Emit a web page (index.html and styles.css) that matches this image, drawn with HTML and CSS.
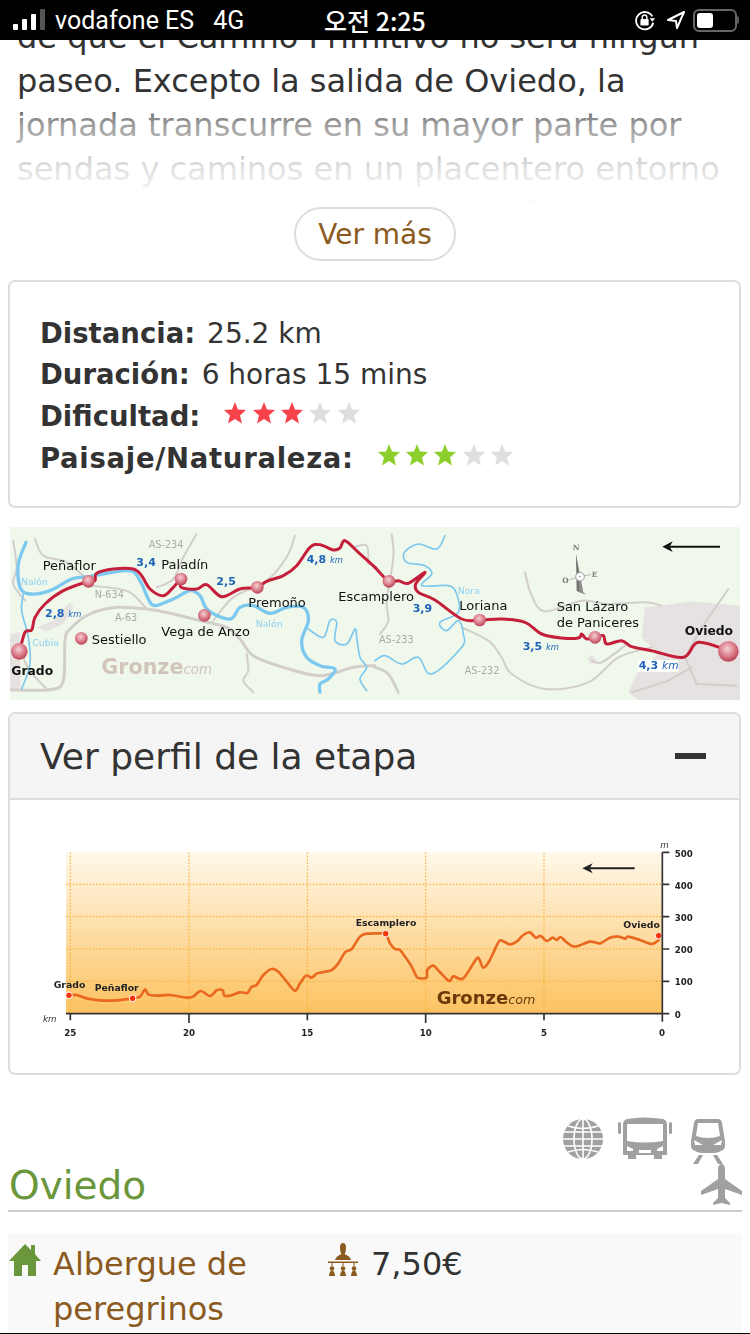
FILE: index.html
```html
<!DOCTYPE html>
<html>

<head>
    <meta charset="UTF-8">
    <title>Etapa Oviedo - Grado</title>
    <link rel="stylesheet" href="styles.css">
</head>

<body>
<div class="page">
    <div class="status-bar">
        <div class="status-left">
            <svg class="signal" width="32" height="22" viewBox="0 0 32 22">
                <rect x="0" y="15" width="5" height="6" rx="1" fill="#fff"/>
                <rect x="9" y="10" width="5" height="11" rx="1" fill="#fff"/>
                <rect x="18" y="5" width="5" height="16" rx="1" fill="#fff"/>
                <rect x="27" y="0" width="5" height="21" rx="1" fill="#555"/>
            </svg>
            <span>vodafone ES</span>
            <span class="network">4G</span>
        </div>
        <div class="status-time">오전 2:25</div>
        <div class="status-right">
            <svg width="22" height="22" viewBox="0 0 24 24">
                <path d="M20 8 A9.500 9.500 0 1 0 21 15" fill="none" stroke="#fff" stroke-width="2"/>
                <path d="M17 10 L23 10 L20 14 Z" fill="#fff"/>
                <rect x="7" y="11" width="9" height="7" rx="1" fill="#fff"/>
                <path d="M9 11 V9 a2.500 2.500 0 0 1 5 0 V11" fill="none" stroke="#fff" stroke-width="1.500"/>
            </svg>
            <svg class="location" width="20" height="20" viewBox="0 0 20 20">
                <path d="M18 2 L2 10 L10 11 L11 18 Z" fill="none" stroke="#fff" stroke-width="2" stroke-linejoin="round"/>
            </svg>
            <div class="battery"><div class="battery-level"></div></div>
            <div class="battery-tip"></div>
        </div>
    </div>

    <div class="intro">
        <p class="intro-text">de que el Camino Primitivo no será ningún paseo. Excepto la salida de Oviedo, la jornada transcurre en su mayor parte por sendas y caminos en un placentero entorno natural, entre bosques y pequeñas aldeas</p>
        <div class="intro-fade"></div>
    </div>
    <div class="more-row"><a class="more-button">Ver más</a></div>

    <div class="card stats">
        <div class="stat stat-first"><b>Distancia:</b> 25.2 km</div>
        <div class="stat"><b>Duración:</b> 6 horas 15 mins</div>
        <div class="stat stat-stars">
            <b>Dificultad:</b>
            <span class="stars stars-hard">
                <svg viewBox="0 0 24 24"><path d="M12 1 L15 8.500 L23 9 L17 14.500 L19 22.500 L12 18 L5 22.500 L7 14.500 L1 9 L9 8.500 Z" fill="#f6434b"/></svg>
                <svg viewBox="0 0 24 24"><path d="M12 1 L15 8.500 L23 9 L17 14.500 L19 22.500 L12 18 L5 22.500 L7 14.500 L1 9 L9 8.500 Z" fill="#f6434b"/></svg>
                <svg viewBox="0 0 24 24"><path d="M12 1 L15 8.500 L23 9 L17 14.500 L19 22.500 L12 18 L5 22.500 L7 14.500 L1 9 L9 8.500 Z" fill="#f6434b"/></svg>
                <svg viewBox="0 0 24 24"><path d="M12 1 L15 8.500 L23 9 L17 14.500 L19 22.500 L12 18 L5 22.500 L7 14.500 L1 9 L9 8.500 Z" fill="#dedede"/></svg>
                <svg viewBox="0 0 24 24"><path d="M12 1 L15 8.500 L23 9 L17 14.500 L19 22.500 L12 18 L5 22.500 L7 14.500 L1 9 L9 8.500 Z" fill="#dedede"/></svg>
            </span>
        </div>
        <div class="stat stat-stars">
            <b class="stat-long">Paisaje/Naturaleza:</b>
            <span class="stars stars-nature">
                <svg viewBox="0 0 24 24"><path d="M12 1 L15 8.500 L23 9 L17 14.500 L19 22.500 L12 18 L5 22.500 L7 14.500 L1 9 L9 8.500 Z" fill="#8ccf2c"/></svg>
                <svg viewBox="0 0 24 24"><path d="M12 1 L15 8.500 L23 9 L17 14.500 L19 22.500 L12 18 L5 22.500 L7 14.500 L1 9 L9 8.500 Z" fill="#8ccf2c"/></svg>
                <svg viewBox="0 0 24 24"><path d="M12 1 L15 8.500 L23 9 L17 14.500 L19 22.500 L12 18 L5 22.500 L7 14.500 L1 9 L9 8.500 Z" fill="#8ccf2c"/></svg>
                <svg viewBox="0 0 24 24"><path d="M12 1 L15 8.500 L23 9 L17 14.500 L19 22.500 L12 18 L5 22.500 L7 14.500 L1 9 L9 8.500 Z" fill="#dedede"/></svg>
                <svg viewBox="0 0 24 24"><path d="M12 1 L15 8.500 L23 9 L17 14.500 L19 22.500 L12 18 L5 22.500 L7 14.500 L1 9 L9 8.500 Z" fill="#dedede"/></svg>
            </span>
        </div>
    </div>

    <svg class="route-map" width="730" height="173" viewBox="30 9 2190 519">
        <defs>
            <radialGradient id="pin" cx="45%" cy="38%" r="65%">
                <stop offset="0" stop-color="#f5d0d6"/>
                <stop offset="0.55" stop-color="#dc7f8c"/>
                <stop offset="1" stop-color="#b63a4e"/>
            </radialGradient>
        </defs>
        <rect x="30" y="9" width="2190" height="519" fill="#f0f8ec"/>

        <!-- zonas urbanas -->
        <g fill="#e6e2e2">
            <path d="M30 330 L60 325 L62 500 L30 500 Z"/>
            <path d="M110 310 L160 290 L210 235 L220 250 L190 300 L140 322 Z"/>
            <g transform="translate(1125 0)">
                <path d="M810 250 L860 245 L950 232 L1095 245 L1095 528 L790 528 L760 505 L790 440 L850 390 L800 340 Z"/>
                <path d="M636 405 L650 392 L670 415 L650 420 Z"/>
            </g>
        </g>

        <!-- carreteras -->
        <g fill="none" stroke="#d2cecb" stroke-width="6" stroke-linejoin="round" stroke-linecap="round">
            <path class="smooth" stroke-width="9" d="M30 497 L150 497 L190 470 L195 350 L210 315 L270 270 L350 250 L440 255 L520 270 L600 290 L680 310 L720 345 L760 395 L850 430 L960 455 L1060 430 L1125 425"/>
            <path class="smooth" d="M265 185 L320 190 L390 205 L440 255"/>
            <path class="smooth" d="M105 45 L130 95 L200 115 L265 170"/>
            <path class="smooth" d="M40 50 L50 130 L40 180 L75 230"/>
            <path class="smooth" d="M590 30 L550 100 L520 165 L470 190"/>
            <path class="smooth" d="M885 35 L860 100 L800 170 L700 220 L640 290"/>
            <path class="smooth" d="M1060 70 L1100 65 L1105 120"/>
            <path class="smooth" d="M140 495 L90 440 L60 380"/>
            <path class="smooth" d="M740 390 L745 440 L730 470 L760 505"/>
            <g transform="translate(1125 0)">
                <path class="smooth" d="M50 30 L55 100 L35 230 L40 290 L15 330"/>
                <path class="smooth" stroke-width="8" d="M0 430 L40 450 L70 505"/>
                <path class="smooth" d="M260 310 L340 350 L380 400 L410 450 L510 495 L640 475 L730 400 L830 370"/>
                <path class="smooth" d="M450 145 L470 215 L510 262 L620 230 L700 240 L810 235 L860 245"/>
                <path d="M1060 195 L980 310 L930 400 L965 480 L1085 485"/>
                <path d="M770 505 L880 470 L950 430"/>
                <path class="smooth" d="M650 410 L680 415 L750 365"/>
            </g>
        </g>

        <!-- rios -->
        <g fill="none" stroke="#7cc8ee" stroke-width="5" stroke-linejoin="round" stroke-linecap="round">
            <path class="smooth" stroke-width="10" d="M78 55 L55 120 L60 190 L90 210 L150 200 L215 165 L265 158 L385 140 L420 170 L445 225 L465 245 L520 225 L570 200 L600 215 L625 260 L690 285 L720 250 L760 245 L810 268 L860 250 L910 250 L925 290 L905 350 L920 400 L960 425 L1005 435 L985 465 L960 480 L960 505"/>
            <path class="smooth" d="M70 210 L65 260 L85 340 L90 420 L65 495"/>
            <path class="smooth" d="M925 315 L970 340 L990 290 L1010 295 L1005 350 L1040 360 L1065 315 L1070 340 L1080 400 L1100 430 L1080 465 L1100 500"/>
            <g transform="translate(1125 0)">
                <path class="smooth" d="M210 35 L185 75 L130 60 L88 85 L95 115 L150 125 L170 150 L140 185 L220 185 L245 210 L250 265 L195 295 L215 320 L250 290 L265 330 L260 370 L170 450 L130 400 L80 420 L30 395 L0 410"/>
            </g>
        </g>

        <!-- ruta -->
        <g fill="none" stroke="#c41e3a" stroke-width="9" stroke-linejoin="round" stroke-linecap="round">
            <path class="smooth" d="M58,385 75,325 95,318 105,280 135,240 190,200 265,172 285,170 290,148 340,135 400,135 425,155 450,195 490,215 520,190 543,165 543,190 590,195 620,182 665,218 720,195 772,190 800,172 850,155 890,125 930,70 960,62 1000,78 1020,72 1035,50 1075,85 1125,130"/>
            <path class="smooth" transform="translate(1125 0)" d="M0,130 42,172 70,170 100,178 150,145 122,180 130,205 180,228 260,285 315,288 380,285 450,295 500,330 560,342 610,342 620,330 635,345 660,340 685,335 695,360 740,350 770,368 830,380 925,400 970,355 1060,380"/>
        </g>

        <!-- pueblos -->
        <g fill="url(#pin)">
            <circle cx="58" cy="382" r="25"/>
            <circle cx="265" cy="172" r="19"/>
            <circle cx="244" cy="343" r="19"/>
            <circle cx="543" cy="165" r="19"/>
            <circle cx="613" cy="274" r="19"/>
            <circle cx="772" cy="190" r="19"/>
            <circle cx="1167" cy="172" r="19"/>
            <circle cx="1439" cy="288" r="19"/>
            <circle cx="1785" cy="340" r="19"/>
            <circle cx="2185" cy="382" r="31"/>
        </g>

        <g class="map-town">
            <text x="128" y="139">Peñaflor</text>
            <text x="275" y="359">Sestiello</text>
            <text x="484" y="134">Paladín</text>
            <text x="484" y="335">Vega de Anzo</text>
            <text x="745" y="248">Premoño</text>
            <text x="1015" y="230">Escamplero</text>
            <text x="1378" y="257">Loriana</text>
            <text x="1670" y="260">San Lázaro</text>
            <text x="1670" y="308">de Paniceres</text>
            <text class="map-town-main" x="34" y="454">Grado</text>
            <text class="map-town-main" x="2054" y="332">Oviedo</text>
        </g>
        <g class="map-road">
            <text x="446" y="71">AS-234</text>
            <text x="284" y="221">N-634</text>
            <text x="345" y="291">A-63</text>
            <text x="1137" y="356">AS-233</text>
            <text x="1394" y="449">AS-232</text>
        </g>
        <g class="map-river">
            <text x="63" y="182">Nalón</text>
            <text x="97" y="365">Cubia</text>
            <text x="767" y="308">Nalón</text>
            <text x="1373" y="209">Nora</text>
        </g>
        <rect x="1915" y="408" width="120" height="36" fill="#fff"/>
        <g class="map-km">
            <text x="135" y="278">2,8 <tspan class="map-km-unit">km</tspan></text>
            <text x="409" y="125">3,4</text>
            <text x="649" y="182">2,5</text>
            <text x="920" y="117">4,8 <tspan class="map-km-unit">km</tspan></text>
            <text x="1238" y="263">3,9</text>
            <text x="1568" y="377">3,5 <tspan class="map-km-unit">km</tspan></text>
            <text x="1916" y="435">4,3 <tspan class="map-km-unit map-km-wide">km</tspan></text>
        </g>
        <text class="map-logo" x="304" y="450">Gronze<tspan class="map-logo-com">com</tspan></text>

        <!-- rosa de los vientos -->
        <g transform="translate(1125 0)">
            <path d="M603 90 L625 205 L634 212 L612 205 Z" fill="#8c8c8c"/>
            <path d="M603 90 L612 150 L612 205 L605 200 Z" fill="#6f6f6f"/>
            <circle cx="615" cy="158" r="13" fill="#fff" stroke="#999" stroke-width="3"/>
            <circle cx="615" cy="158" r="2" fill="#666"/>
            <path d="M582 167 L602 162 M628 155 L648 152" stroke="#999" stroke-width="2"/>
            <g class="map-compass">
                <text x="593" y="77">N</text>
                <text x="562" y="177">O</text>
                <text x="650" y="160">E</text>
            </g>
            <path d="M1035 68 H885" stroke="#111" stroke-width="6"/>
            <path d="M862 68 L893 52 L884 68 L893 84 Z" fill="#111"/>
        </g>
    </svg>

    <div class="card profile">
        <div class="profile-head">
            <span>Ver perfil de la etapa</span>
            <span class="collapse-bar"></span>
        </div>
        <div class="profile-body">
            <svg class="profile-chart" width="690" height="210" viewBox="0 0 2070 630">
                <defs>
                    <linearGradient id="sky" x1="0" y1="0" x2="0" y2="1">
                        <stop offset="0" stop-color="#fff8ea"/>
                        <stop offset="1" stop-color="#fcc260"/>
                    </linearGradient>
                </defs>
                <rect x="108" y="52" width="1789" height="484" fill="url(#sky)"/>
                <g stroke="#fbab2e" stroke-width="3" stroke-dasharray="5 5" fill="none">
                    <path d="M108 148 H1897 M108 245 H1897 M108 342 H1897 M108 439 H1897"/>
                    <path d="M121 52 V536 M477 52 V536 M832 52 V536 M1187 52 V536 M1542 52 V536"/>
                </g>
                <path class="smooth" fill="none" stroke="#e8691f" stroke-width="8" stroke-linejoin="round" stroke-linecap="round" d="M118,481 140,480 170,490 210,496 260,496 308,490 330,485 345,463 355,478 380,482 420,480 470,488 490,484 512,468 540,483 560,466 578,466 583,482 600,482 630,472 652,474 665,455 680,450 700,420 725,402 745,410 770,440 795,467 810,445 828,422 845,428 860,416 875,412 905,405 925,385 945,352 965,342 990,305 1010,296 1050,295 1067,296 1080,325 1095,342 1110,345 1125,365 1145,395 1160,425 1170,430 1190,428 1192,405 1210,392 1230,412 1258,438 1270,424 1300,430 1338,373 1348,373 1360,398 1378,378 1405,322 1415,317 1440,328 1460,320 1480,300 1500,292 1517,308 1532,303 1550,318 1568,308 1580,315 1592,306 1610,322 1635,335 1680,320 1710,325 1740,308 1765,305 1785,311 1795,305 1830,315 1865,327 1886,315"/>
                <g fill="#f7330c" stroke="#fff" stroke-width="3">
                    <circle cx="117" cy="481" r="10"/>
                    <circle cx="308" cy="490" r="10"/>
                    <circle cx="1067" cy="296" r="10"/>
                    <circle cx="1886" cy="302" r="10"/>
                </g>
                <path d="M1814 100 H1680" stroke="#222" stroke-width="6"/>
                <path d="M1657 100 L1688 85 L1679 100 L1688 115 Z" fill="#222"/>
                <g stroke="#333" stroke-width="5" fill="none">
                    <path d="M108 536 H1897 M1897 52 V560 M1897 52 H1918 M1897 148 H1918 M1897 245 H1918 M1897 342 H1918 M1897 439 H1918 M1897 536 H1918"/>
                    <path d="M121 536 V556 M477 536 V564 M832 536 V556 M1187 536 V564 M1542 536 V556"/>
                </g>
                <g class="chart-place">
                    <text x="71" y="458">Grado</text>
                    <text x="194" y="467">Peñaflor</text>
                    <text x="977" y="272">Escamplero</text>
                    <text x="1780" y="280">Oviedo</text>
                </g>
                <g class="chart-axis">
                    <text x="1934" y="65">500</text>
                    <text x="1934" y="161">400</text>
                    <text x="1934" y="258">300</text>
                    <text x="1934" y="354">200</text>
                    <text x="1934" y="451">100</text>
                    <text x="1934" y="548">0</text>
                    <text x="103" y="603">25</text>
                    <text x="459" y="603">20</text>
                    <text x="814" y="603">15</text>
                    <text x="1169" y="603">10</text>
                    <text x="1533" y="603">5</text>
                    <text x="1887" y="603">0</text>
                </g>
                <text class="chart-unit" x="39" y="560">km</text>
                <text class="chart-unit" x="1891" y="40">m</text>
                <text class="chart-logo" x="1220" y="507">Gronze<tspan class="chart-logo-com">com</tspan></text>
            </svg>
        </div>
    </div>

    <div class="place-head">
        <h2 class="place-name">Oviedo</h2>
        <div class="transport">
            <svg class="icon-globe" width="40" height="40" viewBox="0 0 40 40">
                <circle cx="20" cy="20" r="20" fill="#a0a0a0"/>
                <g fill="none" stroke="#fff" stroke-width="1.600">
                    <ellipse cx="20" cy="20" rx="9" ry="20"/>
                    <path d="M20 0 V40 M1 13 H39 M0 20 H40 M1 27 H39"/>
                    <path d="M5 7 Q20 12 35 7 M5 33 Q20 28 35 33"/>
                </g>
            </svg>
            <svg class="icon-bus" width="54" height="42" viewBox="0 0 54 42">
                <path d="M9 2 Q27 -1 45 2 Q49 3 49 8 V38 H44 V42 H36 V38 H18 V42 H10 V38 H5 V8 Q5 3 9 2 Z" fill="#a0a0a0"/>
                <rect x="0" y="5" width="3" height="12" rx="1.500" fill="#a0a0a0"/>
                <rect x="51" y="5" width="3" height="12" rx="1.500" fill="#a0a0a0"/>
                <path d="M9 7 H45 V24 Q27 27 9 24 Z" fill="#fff"/>
                <path d="M9 29 L15 32 V34 H9 Z M45 29 L39 32 V34 H45 Z M21 33 H33 V36 H21 Z" fill="#fff"/>
            </svg>
            <svg class="icon-train" width="34" height="45" viewBox="0 0 34 45">
                <path d="M7 0 H27 Q30 0 31 4 L34 22 V28 Q33 32 24 34 H10 Q1 32 0 28 V22 L3 4 Q4 0 7 0 Z" fill="#a0a0a0"/>
                <path d="M7 4 H27 L29 17 Q17 21 5 17 Z" fill="#fff"/>
                <path d="M3 21 L12 26 L4 26 Z M31 21 L22 26 L30 26 Z" fill="#fff"/>
                <path d="M8 36 H12 L7 45 H2 Z M22 36 H26 L32 45 H27 Z" fill="#a0a0a0"/>
            </svg>
            <svg class="icon-plane" width="41" height="41" viewBox="0 0 41 41">
                <path d="M20.500 0 Q24 0 24 6 V15 L41 27 V31 L24 25 V34 L29 39 V41 L20.500 39 L12 41 V39 L17 34 V25 L0 31 V27 L17 15 V6 Q17 0 20.500 0 Z" fill="#a0a0a0"/>
            </svg>
        </div>
    </div>

    <div class="lodging">
        <div class="lodging-name">
            <svg class="icon-house" width="32" height="32" viewBox="0 0 32 32">
                <path d="M16 0 L22 6 V1 H26 V10 L32 17 H27 V32 H19 V21 H13 V32 H5 V17 H0 Z" fill="#6a963c"/>
            </svg>
            <a>Albergue de peregrinos</a>
        </div>
        <div class="lodging-price">
            <svg class="icon-beds" width="30" height="34" viewBox="0 0 30 34">
                <g fill="#8b5a1e">
                    <path d="M15 0 Q18 0 18 5 Q18 9 16.500 11 Q22 13 23 17 H7 Q8 13 13.500 11 Q12 9 12 5 Q12 0 15 0 Z"/>
                    <rect x="0" y="18.500" width="30" height="1.500"/>
                    <path d="M3.500 20 H4.500 V23 H3.500 Z M14.500 20 H15.500 V23 H14.500 Z M25.500 20 H26.500 V23 H25.500 Z"/>
                    <circle cx="4" cy="25.500" r="2.300"/>
                    <circle cx="15" cy="25.500" r="2.300"/>
                    <circle cx="26" cy="25.500" r="2.300"/>
                    <path d="M1 33 Q1.500 27.500 4 27.500 Q6.500 27.500 7 33 Z M12 33 Q12.500 27.500 15 27.500 Q17.500 27.500 18 33 Z M23 33 Q23.500 27.500 26 27.500 Q28.500 27.500 29 33 Z"/>
                </g>
            </svg>
            <span>7,50€</span>
        </div>
    </div>
</div>
<script src="smooth.js"></script>
</body>
</html>
```

FILE: styles.css
```css
body {
    margin: 0;
    background-color: #fff;
    font-family: "DejaVu Sans", "Noto Sans CJK KR", sans-serif;
    color: #333;
}

.page {
    display: flex;
    flex-direction: column;
    width: 750px;
    height: 1334px;
    box-sizing: border-box;
    overflow: hidden;
    border-bottom: 1px solid #000;
}

.status-bar {
    display: flex;
    flex: none;
    align-items: center;
    height: 40px;
    background-color: #000;
    color: #fff;
    font-family: Roboto, "Noto Sans CJK KR", sans-serif;
    font-size: 25px;
}

.status-left {
    display: flex;
    flex: 0 0 324px;
    align-items: center;
    box-sizing: border-box;
    padding-left: 13px;
}

.signal {
    margin-right: 10px;
}

.network {
    margin-left: 19px;
}

.status-time {
    font-family: "Noto Sans CJK KR", sans-serif;
    font-size: 25px;
    font-weight: 500;
}

.status-right {
    display: flex;
    align-items: center;
    margin-left: auto;
    padding-right: 11px;
}

.location {
    margin: 0 7px 0 10px;
}

.battery {
    box-sizing: border-box;
    width: 44px;
    height: 23px;
    border: 2px solid #666;
    border-radius: 6px;
}

.battery-level {
    width: 16px;
    height: 15px;
    margin: 2px;
    background-color: #fff;
    border-radius: 3px;
}

.battery-tip {
    width: 2px;
    height: 8px;
    background-color: #555;
    border-radius: 0 2px 2px 0;
}

.intro {
    position: relative;
    flex: none;
    height: 165px;
    overflow: hidden;
}

.intro-text {
    margin: -25px 0 0;
    padding: 0 10px 0 17px;
    font-size: 32px;
    line-height: 44px;
}

.intro-fade {
    position: absolute;
    left: 0;
    right: 0;
    top: 55px;
    bottom: 0;
    background: linear-gradient(rgba(255, 255, 255, 0), rgba(255, 255, 255, 0.52) 27%, rgba(255, 255, 255, 0.85) 67%, #fff);
}

.more-row {
    display: flex;
    flex: none;
    justify-content: center;
    height: 75px;
}

.more-button {
    display: flex;
    align-items: center;
    justify-content: center;
    box-sizing: border-box;
    width: 162px;
    height: 54px;
    margin-top: 2px;
    border: 2px solid #ddd;
    border-radius: 27px;
    color: #8b5a1e;
    font-size: 28px;
}

.card {
    flex: none;
    box-sizing: border-box;
    width: 733px;
    margin-left: 8px;
    border: 2px solid #ddd;
    border-radius: 7px;
}

.stats {
    height: 228px;
    padding: 31px 30px 0;
}

.stat {
    height: 41px;
    font-size: 28px;
    line-height: 41px;
}

.stat b {
    margin-right: 3px;
    font-size: 27.5px;
    font-weight: bold;
}

.stat .stat-long {
    letter-spacing: 0.7px;
}

.stat-stars {
    display: flex;
    align-items: center;
    height: 42px;
}

.stars {
    display: flex;
    gap: 4.3px;
    margin-top: -6px;
    filter: blur(0.5px);
}

.stars svg {
    width: 24px;
    height: 24px;
}

.stars-hard {
    margin-left: 20px;
}

.stars-nature {
    margin-left: 20px;
}

.route-map {
    display: block;
    flex: none;
    margin: 19px 0 0 10px;
    filter: blur(0.3px);
}

.map-town text {
    font-size: 39px;
    fill: #111;
}

.map-town .map-town-main {
    font-size: 37px;
    font-weight: bold;
}

.map-road text {
    font-size: 29px;
    fill: #aaa;
}

.map-river text {
    font-size: 28px;
    fill: #8fd0f2;
}

.map-km text {
    font-size: 33px;
    font-weight: bold;
    fill: #1c63b8;
}

.map-km .map-km-unit {
    font-size: 25px;
    font-weight: normal;
    font-style: italic;
}

.map-km .map-km-wide {
    font-size: 32px;
}

.map-logo {
    font-size: 62px;
    font-weight: bold;
    fill: #d2c4ba;
}

.map-logo-com {
    font-size: 40px;
    font-weight: normal;
    font-style: italic;
}

.map-compass text {
    font-family: "DejaVu Serif", serif;
    font-size: 22px;
    font-weight: bold;
    fill: #777;
}

.profile {
    height: 363px;
    margin-top: 12px;
}

.profile-head {
    display: flex;
    align-items: center;
    justify-content: space-between;
    box-sizing: border-box;
    height: 86px;
    padding: 0 33px 0 30px;
    background-color: #f5f5f5;
    border-bottom: 2px solid #ddd;
    border-radius: 5px 5px 0 0;
    font-size: 36px;
}

.collapse-bar {
    width: 31px;
    height: 6px;
    background-color: #333;
}

.profile-body {
    padding: 35px 0 0 20px;
}

.profile-chart {
    display: block;
    filter: blur(0.3px);
}

.chart-place text {
    font-size: 28px;
    font-weight: bold;
    fill: #222;
}

.chart-axis text {
    font-size: 26px;
    font-weight: bold;
    fill: #222;
}

.chart-unit {
    font-size: 26px;
    font-style: italic;
    fill: #333;
}

.chart-logo {
    font-size: 54px;
    font-weight: bold;
    fill: #6a3a0a;
}

.chart-logo-com {
    font-size: 38px;
    font-weight: normal;
    font-style: italic;
}

.place-head {
    display: flex;
    flex: none;
    align-items: flex-end;
    justify-content: space-between;
    margin: 42px 8px 0;
    border-bottom: 2px solid #ccc;
}

.place-name {
    margin: 0 0 0 1px;
    color: #6a963c;
    font-size: 39px;
    font-weight: normal;
    line-height: 49px;
}

.transport {
    display: flex;
    flex-wrap: wrap;
    align-content: flex-start;
    justify-content: flex-end;
    width: 179px;
    height: 93px;
}

.icon-globe {
    margin: 2px 15px 0 0;
}

.icon-bus {
    margin-right: 19px;
}

.icon-train {
    margin: 2px 17px 0 0;
}

.lodging {
    display: flex;
    flex: none;
    align-items: flex-start;
    margin: 21px 8px 0;
    padding: 9px 0 5px;
    background-color: #f9f9f9;
}

.lodging-name {
    display: flex;
    flex: 0 0 320px;
    align-items: flex-start;
    color: #8b5a1e;
    font-size: 32px;
    line-height: 45px;
}

.icon-house {
    flex: none;
    margin: 2px 12px 0 1px;
}

.lodging-name a {
    width: 240px;
}

.lodging-price {
    display: flex;
    align-items: flex-start;
    font-size: 32px;
    line-height: 45px;
}

.icon-beds {
    margin: 1px 13px 0 0;
}
```

FILE: smooth.js
```js
// turn the hand-traced point lists of the map and profile into soft curves
document.querySelectorAll('.smooth').forEach((line) => {
    const nums = line.getAttribute('d').match(/-?[\d.]+/g).map(Number);
    const pts = [];
    for (let i = 0; i < nums.length; i += 2) {
        pts.push([nums[i], nums[i + 1]]);
    }
    let d = `M${pts[0][0]} ${pts[0][1]}`;
    for (let i = 0; i < pts.length - 1; i++) {
        const p0 = pts[i - 1] || pts[i];
        const p1 = pts[i];
        const p2 = pts[i + 1];
        const p3 = pts[i + 2] || p2;
        const c1x = p1[0] + (p2[0] - p0[0]) / 6;
        const c1y = p1[1] + (p2[1] - p0[1]) / 6;
        const c2x = p2[0] - (p3[0] - p1[0]) / 6;
        const c2y = p2[1] - (p3[1] - p1[1]) / 6;
        d += ` C${c1x} ${c1y} ${c2x} ${c2y} ${p2[0]} ${p2[1]}`;
    }
    line.setAttribute('d', d);
});
```
